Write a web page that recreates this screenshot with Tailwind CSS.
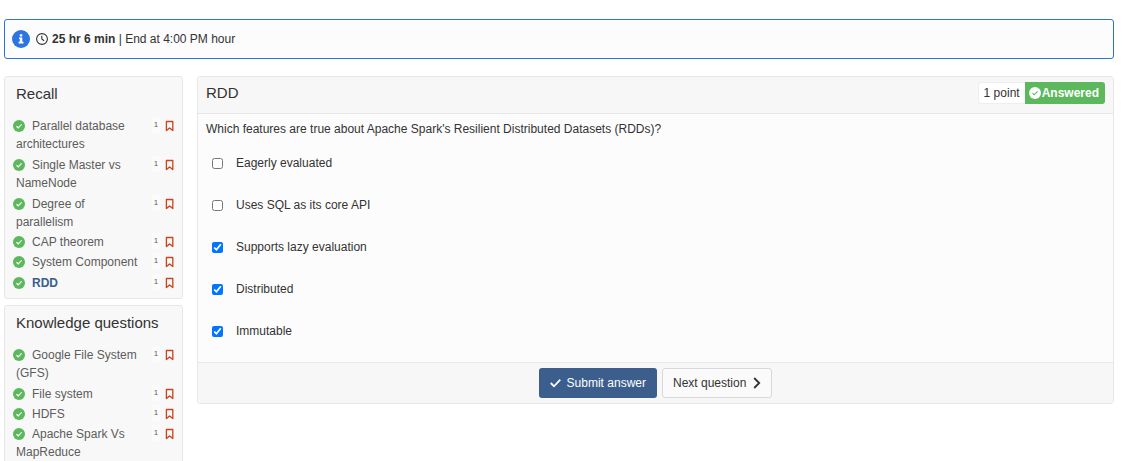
<!DOCTYPE html>
<html lang="en">
<head>
<meta charset="utf-8">
<title>Quiz</title>
<script src="https://cdn.jsdelivr.net/npm/@tailwindcss/browser@4"></script>
</head>
<body class="bg-white pt-[19px] pr-[25px] pl-1 font-['Liberation_Sans',Arial,sans-serif] text-[12px] leading-[18px] text-[#333]">
<svg class="hidden" aria-hidden="true">
  <symbol id="ok" viewBox="0 0 12 12"><circle cx="6" cy="6" r="6" fill="#5cb85c"/><path d="M3.5 6.2 5.2 7.8 8.6 4.3" fill="none" stroke="#fff" stroke-width="1.2"/></symbol>
  <symbol id="mark" viewBox="0 0 9 12"><path d="M1.4 1.5H7.8V10.6L4.6 7.9 1.4 10.6Z" fill="none" stroke="#c9431f" stroke-width="1.3" stroke-linejoin="round"/></symbol>
</svg>

<div class="flex h-10 items-center rounded-[3px] border border-[#2a74da] bg-[#fcfcfc] pl-[7px]" role="status">
  <svg class="size-[18px]" viewBox="0 0 18 18"><circle cx="9" cy="9" r="9" fill="#2b74e2"/><path d="M7.8 4.2h2.5v2.3H7.8zM7 7.4h3.3v4.4h1.2v1.6H6.6v-1.6h1.2V9H7z" fill="#fff"/></svg>
  <svg class="mr-1 ml-[6px] size-3" viewBox="0 0 12 12" fill="none" stroke="#333" stroke-width="1.1"><circle cx="6" cy="6" r="5.4"/><path d="M5.8 2.7V6l2.3 1.7"/></svg>
  <p><b>25 hr 6 min</b> | End at 4:00 PM hour</p>
</div>

<div class="mt-[17px] flex items-start gap-[14px]">
  <nav class="flex w-[179px] shrink-0 flex-col gap-[6px] text-[#5c5c5c]">
    <section class="rounded-[3px] border border-[#e7e7e7] bg-[#f8f8f8] pt-2 pr-2 pb-1 pl-[11px]">
      <h2 class="mb-[14px] text-[15px] leading-[18px] text-[#333]">Recall</h2>
      <ul>
        <li class="mb-[3px] flex"><a href="#" class="w-[127px]"><svg class="mr-[7px] -ml-[3px] inline size-3 align-[-2px]"><use href="#ok"/></svg>Parallel database architectures</a><span class="mr-[5px] ml-auto h-4 w-2 bg-[#fbfbfb] text-center text-[8px] leading-4">1</span><svg class="mt-[3px] h-3 w-[9px]"><use href="#mark"/></svg></li>
        <li class="mb-[3px] flex"><a href="#" class="w-[127px]"><svg class="mr-[7px] -ml-[3px] inline size-3 align-[-2px]"><use href="#ok"/></svg>Single Master vs NameNode</a><span class="mr-[5px] ml-auto h-4 w-2 bg-[#fbfbfb] text-center text-[8px] leading-4">1</span><svg class="mt-[3px] h-3 w-[9px]"><use href="#mark"/></svg></li>
        <li class="mb-0.5 flex"><a href="#" class="w-[127px]"><svg class="mr-[7px] -ml-[3px] inline size-3 align-[-2px]"><use href="#ok"/></svg>Degree of parallelism</a><span class="mr-[5px] ml-auto h-4 w-2 bg-[#fbfbfb] text-center text-[8px] leading-4">1</span><svg class="mt-[3px] h-3 w-[9px]"><use href="#mark"/></svg></li>
        <li class="mb-0.5 flex"><a href="#" class="w-[127px]"><svg class="mr-[7px] -ml-[3px] inline size-3 align-[-2px]"><use href="#ok"/></svg>CAP theorem</a><span class="mr-[5px] ml-auto h-4 w-2 bg-[#fbfbfb] text-center text-[8px] leading-4">1</span><svg class="mt-[3px] h-3 w-[9px]"><use href="#mark"/></svg></li>
        <li class="mb-[3px] flex"><a href="#" class="w-[127px]"><svg class="mr-[7px] -ml-[3px] inline size-3 align-[-2px]"><use href="#ok"/></svg>System Component</a><span class="mr-[5px] ml-auto h-4 w-2 bg-[#fbfbfb] text-center text-[8px] leading-4">1</span><svg class="mt-[3px] h-3 w-[9px]"><use href="#mark"/></svg></li>
        <li class="mb-0.5 flex"><a href="#" aria-current="page" class="w-[127px] font-bold text-[#3b5e8c]"><svg class="mr-[7px] -ml-[3px] inline size-3 align-[-2px]"><use href="#ok"/></svg>RDD</a><span class="mr-[5px] ml-auto h-4 w-2 bg-[#fbfbfb] text-center text-[8px] leading-4">1</span><svg class="mt-[3px] h-3 w-[9px]"><use href="#mark"/></svg></li>
      </ul>
    </section>
    <section class="rounded-[3px] border border-[#e7e7e7] bg-[#f8f8f8] pt-2 pr-2 pb-1 pl-[11px]">
      <h2 class="mb-[14px] text-[15px] leading-[18px] text-[#333]">Knowledge questions</h2>
      <ul>
        <li class="mb-[3px] flex"><a href="#" class="w-[127px]"><svg class="mr-[7px] -ml-[3px] inline size-3 align-[-2px]"><use href="#ok"/></svg>Google File System (GFS)</a><span class="mr-[5px] ml-auto h-4 w-2 bg-[#fbfbfb] text-center text-[8px] leading-4">1</span><svg class="mt-[3px] h-3 w-[9px]"><use href="#mark"/></svg></li>
        <li class="mb-0.5 flex"><a href="#" class="w-[127px]"><svg class="mr-[7px] -ml-[3px] inline size-3 align-[-2px]"><use href="#ok"/></svg>File system</a><span class="mr-[5px] ml-auto h-4 w-2 bg-[#fbfbfb] text-center text-[8px] leading-4">1</span><svg class="mt-[3px] h-3 w-[9px]"><use href="#mark"/></svg></li>
        <li class="mb-0.5 flex"><a href="#" class="w-[127px]"><svg class="mr-[7px] -ml-[3px] inline size-3 align-[-2px]"><use href="#ok"/></svg>HDFS</a><span class="mr-[5px] ml-auto h-4 w-2 bg-[#fbfbfb] text-center text-[8px] leading-4">1</span><svg class="mt-[3px] h-3 w-[9px]"><use href="#mark"/></svg></li>
        <li class="mb-[3px] flex"><a href="#" class="w-[127px]"><svg class="mr-[7px] -ml-[3px] inline size-3 align-[-2px]"><use href="#ok"/></svg>Apache Spark Vs MapReduce</a><span class="mr-[5px] ml-auto h-4 w-2 bg-[#fbfbfb] text-center text-[8px] leading-4">1</span><svg class="mt-[3px] h-3 w-[9px]"><use href="#mark"/></svg></li>
      </ul>
    </section>
  </nav>

  <main class="min-w-0 flex-1 rounded-[3px] border border-[#e7e7e7] bg-[#fcfcfc]">
    <header class="flex items-center justify-between border-b border-[#e7e7e7] bg-[#f7f7f7] pt-[5px] pr-2 pb-[9px] pl-2">
      <h1 class="text-[15px] leading-[22px]">RDD</h1>
      <div class="flex leading-[22px]">
        <span class="rounded-l-[3px] border border-r-0 border-[#eee] bg-white px-[5px] leading-5">1 point</span>
        <span class="flex items-center gap-[1px] rounded-r-[3px] bg-[#5cb85c] pr-[6px] pl-1 font-bold text-white"><svg class="size-3" viewBox="0 0 12 12"><circle cx="6" cy="6" r="6" fill="#fff"/><path d="M3.5 6.2 5.2 7.8 8.6 4.3" fill="none" stroke="#5cb85c" stroke-width="1.1"/></svg>Answered</span>
      </div>
    </header>
    <form>
      <fieldset class="px-2 pt-[6px] pb-[22px]">
        <legend class="contents">Which features are true about Apache Spark's Resilient Distributed Datasets (RDDs)?</legend>
        <div class="mt-4 flex flex-col gap-6 pl-[6px]">
          <label class="flex items-center gap-[13px]"><input type="checkbox" class="size-[11px] accent-[#0075ff]">Eagerly evaluated</label>
          <label class="flex items-center gap-[13px]"><input type="checkbox" class="size-[11px] accent-[#0075ff]">Uses SQL as its core API</label>
          <label class="flex items-center gap-[13px]"><input type="checkbox" checked class="size-[11px] accent-[#0075ff]">Supports lazy evaluation</label>
          <label class="flex items-center gap-[13px]"><input type="checkbox" checked class="size-[11px] accent-[#0075ff]">Distributed</label>
          <label class="flex items-center gap-[13px]"><input type="checkbox" checked class="size-[11px] accent-[#0075ff]">Immutable</label>
        </div>
      </fieldset>
      <footer class="flex justify-center gap-[5px] border-t border-[#e7e7e7] bg-[#f7f7f7] py-[5px]">
        <button type="submit" class="flex h-[30px] items-center gap-[6px] rounded-[3px] bg-[#3b5e8c] px-[11px] text-white"><svg class="h-3 w-[11px]" viewBox="0 0 11 12" fill="none" stroke="#fff" stroke-width="1.8"><path d="M.8 6 4 9.3 10.3 2.7"/></svg>Submit answer</button>
        <button type="button" class="flex h-[30px] items-center gap-[7px] rounded-[3px] border border-[#d8d8d8] bg-[#fafafa] px-[10px]">Next question<svg class="h-3 w-2" viewBox="0 0 8 12" fill="none" stroke="#333" stroke-width="1.8"><path d="M1.2 1 6.2 6 1.2 11"/></svg></button>
      </footer>
    </form>
  </main>
</div>
</body>
</html>
